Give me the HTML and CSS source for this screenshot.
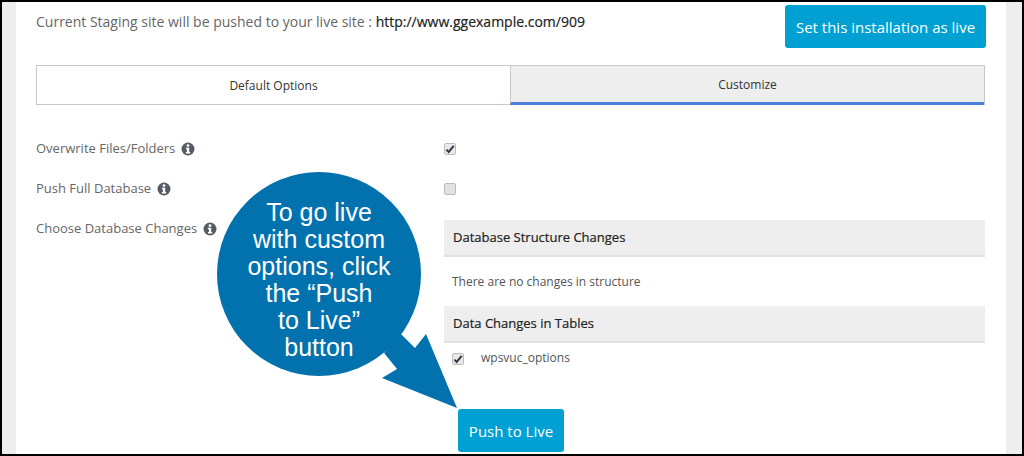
FILE: index.html
```html
<!DOCTYPE html>
<html>
<head>
    <title>Push to Live</title>
    <link rel="stylesheet" href="styles.css">
</head>
<body>
    <div class="frame">
        <div class="page">
            <div class="top-row">
                <p class="site-text">Current Staging site will be pushed to your live site : <b>http://www.ggexample.com/909</b></p>
                <button class="btn btn-live">Set this installation as live</button>
            </div>

            <div class="tabs">
                <div class="tab">Default Options</div>
                <div class="tab active">Customize</div>
            </div>

            <div class="form-row">
                <div class="label">Overwrite Files/Folders
                    <svg class="info" viewBox="0 0 14 14"><circle cx="7" cy="7" r="6.5" fill="#555b66"/><circle cx="7" cy="3.6" r="1.4" fill="#fff"/><path d="M4.9 5.7h3.3v4.2h1v1.5H4.9V9.9h1V7.2h-1z" fill="#fff"/></svg>
                </div>
                <div class="field"><span class="check checked"><svg viewBox="0 0 12 12"><path d="M2.4 6.6l2.3 2.3 5-6" fill="none" stroke="#3b3347" stroke-width="2"/></svg></span></div>
            </div>
            <div class="form-row">
                <div class="label">Push Full Database
                    <svg class="info" viewBox="0 0 14 14"><circle cx="7" cy="7" r="6.5" fill="#555b66"/><circle cx="7" cy="3.6" r="1.4" fill="#fff"/><path d="M4.9 5.7h3.3v4.2h1v1.5H4.9V9.9h1V7.2h-1z" fill="#fff"/></svg>
                </div>
                <div class="field"><span class="check"></span></div>
            </div>
            <div class="form-row">
                <div class="label">Choose Database Changes
                    <svg class="info" viewBox="0 0 14 14"><circle cx="7" cy="7" r="6.5" fill="#555b66"/><circle cx="7" cy="3.6" r="1.4" fill="#fff"/><path d="M4.9 5.7h3.3v4.2h1v1.5H4.9V9.9h1V7.2h-1z" fill="#fff"/></svg>
                </div>
                <div class="field changes">
                    <div class="panel-head">Database Structure Changes</div>
                    <div class="panel-text">There are no changes in structure</div>
                    <div class="panel-head">Data Changes in Tables</div>
                    <div class="table-row">
                        <span class="check checked"><svg viewBox="0 0 12 12"><path d="M2.4 6.6l2.3 2.3 5-6" fill="none" stroke="#3b3347" stroke-width="2"/></svg></span>
                        <span class="table-name">wpsvuc_options</span>
                    </div>
                </div>
            </div>

            <div class="actions">
                <button class="btn btn-push">Push to Live</button>
            </div>
        </div>

        <!-- callout annotation over the page -->
        <div class="callout">
            <svg class="callout-shape" viewBox="0 0 245 240">
                <circle cx="102" cy="102" r="102" fill="#0272ae"/>
                <path d="M183 161l15 15 11-14 31 74-75-30 15-9-13-16z" fill="#0272ae"/>
            </svg>
            <div class="callout-text">To go live<br>with custom<br>options, click<br>the “Push<br>to Live”<br>button</div>
        </div>
    </div>
</body>
</html>
```

FILE: styles.css
```css
* {
    box-sizing: border-box;
}

html, body {
    margin: 0;
    height: 100%;
    overflow: hidden;
}

body {
    font-family: "Open Sans", sans-serif;
    font-size: 13px;
    color: #555;
    background-color: #fff;
}

.frame {
    position: relative;
    height: 456px;
    border: 2px solid #000;
    padding: 0 16px 0 14px;
    background-color: #eeeeee;
}

.page {
    height: 100%;
    padding: 3px 21px 0 20px;
    background-color: #fff;
}

.top-row {
    display: flex;
    justify-content: space-between;
    align-items: flex-start;
    height: 60px;
}

.site-text {
    margin: 7px 0 0;
    font-size: 14px;
    line-height: 20px;
    color: #666;
}

.site-text b {
    font-weight: 400;
    color: #222;
    -webkit-text-stroke: 0.2px #222;
}

.btn {
    border: none;
    border-radius: 3px;
    background-color: #00a0d2;
    color: #fff;
    font-family: "Open Sans", sans-serif;
    font-size: 15px;
    padding: 0;
}

.btn-live {
    width: 201px;
    height: 43px;
    margin-right: -1px;
}

.tabs {
    display: flex;
    height: 40px;
    border: 1px solid #c8c8c8;
}

.tab {
    display: flex;
    align-items: center;
    justify-content: center;
    width: 473px;
    font-size: 12px;
    color: #333;
}

.tab.active {
    flex: 1;
    border-left: 1px solid #c8c8c8;
    border-bottom: 3px solid #4a80dc;
    margin-bottom: -1px;
    background-color: #eeeeee;
}

.tabs + .form-row {
    margin-top: 33px;
}

.form-row {
    display: flex;
}

.label {
    display: flex;
    align-items: center;
    gap: 6px;
    width: 408px;
    height: 20px;
    color: #666;
    font-size: 13px;
    line-height: 20px;
    margin-bottom: 20px;
}

.info {
    width: 14px;
    height: 14px;
    margin-top: 1px;
}

.field {
    flex: 1;
    min-width: 0;
}

.check {
    display: flex;
    align-items: center;
    justify-content: center;
    width: 12px;
    height: 12px;
    margin-top: 5px;
    border: 1px solid #bcbcbc;
    border-radius: 2px;
    background-color: #e2e2e2;
}

.check svg {
    width: 12px;
    height: 12px;
    flex: none;
}

.check.checked {
    background-color: #e9e9e9;
}

.changes {
    margin-top: 2px;
}

.panel-head {
    height: 37px;
    padding: 0 9px;
    background-color: #eeeeee;
    border-bottom: 2px solid #e2e2e2;
    color: #222;
    font-size: 13px;
    line-height: 35px;
    -webkit-text-stroke: 0.2px #222;
}

.panel-text {
    height: 49px;
    padding: 0 8px;
    font-size: 12px;
    line-height: 49px;
    color: #555;
}

.table-row {
    display: flex;
    align-items: flex-start;
    padding: 0 8px;
}

.table-row .check {
    margin-top: 10px;
}

.table-name {
    margin-left: 17px;
    font-size: 12px;
    line-height: 18px;
    margin-top: 6px;
    color: #555;
}

.actions {
    position: absolute;
    left: 456px;
    top: 407px;
}

.btn-push {
    width: 106px;
    height: 43px;
}

.callout {
    position: absolute;
    left: 215px;
    top: 170px;
    width: 245px;
    height: 240px;
}

.callout-shape {
    display: block;
    width: 245px;
    height: 240px;
}

.callout-text {
    position: absolute;
    left: 0;
    top: 27px;
    width: 204px;
    text-align: center;
    font-family: "Liberation Sans", sans-serif;
    font-size: 25px;
    line-height: 27px;
    color: #fff;
}
```
